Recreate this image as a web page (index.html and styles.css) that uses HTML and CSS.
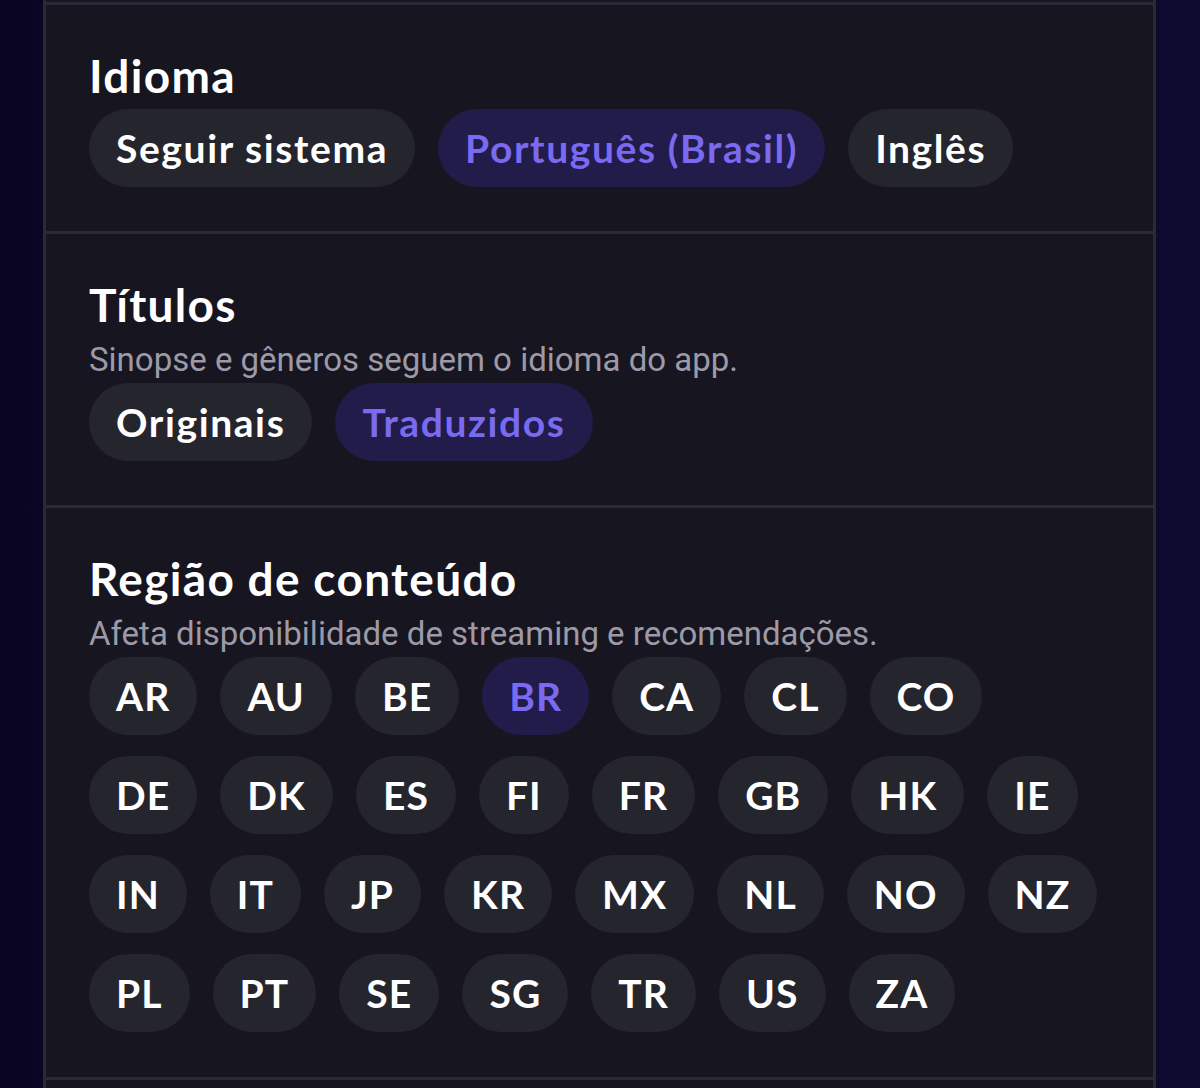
FILE: index.html
```html
<!DOCTYPE html>
<html lang="pt-BR">
<head>
<meta charset="utf-8">
<title>Configurações</title>
<link rel="stylesheet" href="styles.css">
</head>
<body>
<div class="panel">
  <div class="stub"></div>
  <section class="group">
    <h2 class="group-title">Idioma</h2>
    <div class="chips">
      <span class="chip">Seguir sistema</span>
      <span class="chip chip--active">Português (Brasil)</span>
      <span class="chip">Inglês</span>
    </div>
  </section>
  <section class="group">
    <h2 class="group-title">Títulos</h2>
    <p class="group-desc">Sinopse e gêneros seguem o idioma do app.</p>
    <div class="chips">
      <span class="chip">Originais</span>
      <span class="chip chip--active">Traduzidos</span>
    </div>
  </section>
  <section class="group">
    <h2 class="group-title">Região de conteúdo</h2>
    <p class="group-desc">Afeta disponibilidade de streaming e recomendações.</p>
    <div class="chips chips--grid">
      <span class="chip">AR</span>
      <span class="chip">AU</span>
      <span class="chip">BE</span>
      <span class="chip chip--active">BR</span>
      <span class="chip">CA</span>
      <span class="chip">CL</span>
      <span class="chip">CO</span>
      <span class="chip">DE</span>
      <span class="chip">DK</span>
      <span class="chip">ES</span>
      <span class="chip">FI</span>
      <span class="chip">FR</span>
      <span class="chip">GB</span>
      <span class="chip">HK</span>
      <span class="chip">IE</span>
      <span class="chip">IN</span>
      <span class="chip">IT</span>
      <span class="chip">JP</span>
      <span class="chip">KR</span>
      <span class="chip">MX</span>
      <span class="chip">NL</span>
      <span class="chip">NO</span>
      <span class="chip">NZ</span>
      <span class="chip">PL</span>
      <span class="chip">PT</span>
      <span class="chip">SE</span>
      <span class="chip">SG</span>
      <span class="chip">TR</span>
      <span class="chip">US</span>
      <span class="chip">ZA</span>
    </div>
  </section>
  <section class="group group--next"></section>
</div>
</body>
</html>
```

FILE: styles.css
```css
html, body {
  margin: 0;
  padding: 0;
  height: 100%;
}

body {
  background: linear-gradient(90deg, #0a0522 0%, #0c0829 50%, #0d0a31 100%);
  font-family: "Lato", "Inter", "Liberation Sans", sans-serif;
  color: #ffffff;
  overflow: hidden;
}

.panel {
  margin: 0 44px 0 43px;
  min-height: 1200px;
  background: #17151f;
  border-left: 3px solid #2a2935;
  border-right: 3px solid #2a2935;
}

.stub {
  height: 2px;
}

.group {
  border-top: 3px solid #2a2935;
  padding: 43px 43px 44px;
}

.group:nth-of-type(3) {
  padding-bottom: 45px;
}

.group--next {
  padding: 20px 43px;
}

.group-title {
  margin: 0 0 6px;
  font-size: 46px;
  line-height: 55px;
  font-weight: 700;
  letter-spacing: 1.3px;
  color: #ffffff;
}

.group-desc {
  margin: 9px 0 4px;
  font-family: "Roboto", "Liberation Sans", sans-serif;
  font-size: 33px;
  line-height: 38px;
  font-weight: 400;
  color: #9d9aa8;
}

.chips {
  display: flex;
  flex-wrap: wrap;
  gap: 21px 23px;
}

.chip {
  display: inline-flex;
  align-items: center;
  height: 78px;
  padding: 0 27px;
  border-radius: 39px;
  background: #25252e;
  font-size: 39px;
  font-weight: 700;
  letter-spacing: 1.6px;
  color: #ffffff;
  white-space: nowrap;
}

.chips--grid .chip {
  letter-spacing: 1.1px;
}

.chip--active {
  background: #211c49;
  color: #7a6af0;
}
```
